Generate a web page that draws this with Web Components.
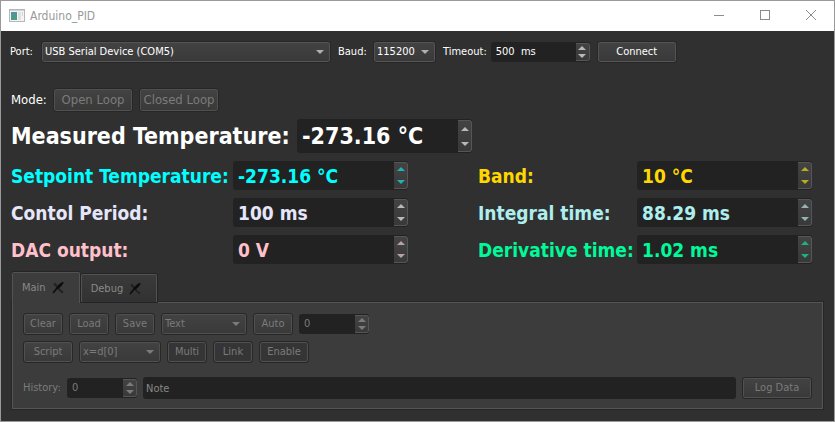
<!DOCTYPE html>
<html lang="en">
<head>
<meta charset="utf-8">
<title>Arduino_PID</title>
<style>
html, body { height: 100%; margin: 0; }
body { font: 11px/14px "DejaVu Sans Condensed", "DejaVu Sans", sans-serif; color: #fff; background: #303030; }
</style>
</head>
<body>
<pid-app></pid-app>
<script>
const define = (name, html, setup) => {
  const tpl = document.createElement('template');
  tpl.innerHTML = html;
  customElements.define(name, class extends HTMLElement {
    connectedCallback() {
      if (this.shadowRoot) return;
      this.attachShadow({ mode: 'open' }).append(tpl.content.cloneNode(true));
      if (setup) setup(this, this.shadowRoot);
    }
  });
};

define('title-bar', `
<style>
:host { display: flex; align-items: center; height: 30px; background: #fff; color: #999; padding-left: 8px; font-size: 12px; line-height: 16px; }
span { flex: 1; margin-left: 5px; }
button { width: 46px; height: 30px; padding: 0 0 2px; border: 0; background: none; display: grid; place-items: center; color: #8c8c8c; }
svg { display: block; }
</style>
<svg width="16" height="14" viewBox="0 0 16 14" aria-hidden="true">
  <defs><linearGradient id="g" x1="0" y1="0" x2="0.6" y2="1"><stop offset="0" stop-color="#5b8ea8"/><stop offset="1" stop-color="#48a07c"/></linearGradient></defs>
  <rect x=".5" y=".5" width="15" height="12" fill="#f4f4f4" stroke="#b4b8bc"/>
  <rect x="1" y="1" width="14" height="1" fill="#c9d3dc"/>
  <rect x="2" y="3" width="6" height="8" fill="url(#g)"/>
  <rect x="9" y="3" width="3" height="8" fill="#e0e0e0"/><rect x="13" y="3" width="1" height="4" fill="#d5d5d5"/>
</svg>
<span><slot></slot></span>
<button aria-label="Minimize"><svg width="10" height="11"><path d="M0 5.5H10" stroke="currentColor"/></svg></button>
<button aria-label="Maximize"><svg width="10" height="11"><rect x=".5" y=".5" width="9" height="9" fill="none" stroke="currentColor"/></svg></button>
<button aria-label="Close"><svg width="10" height="11"><path d="M0 0L10 10M10 0L0 10" stroke="currentColor"/></svg></button>
`);

define('push-button', `
<style>
:host { display: block; }
button { display: block; box-sizing: border-box; width: 100%; height: var(--h, 22px); padding: 0; font: inherit; color: #fff; border: 1px solid #272727; border-radius: 3px; background: linear-gradient(#434343, #393939); box-shadow: inset 0 0 0 1px #545454; white-space: nowrap; }
button:disabled { color: #7b7b7b; box-shadow: inset 0 0 0 1px #505050; }
:host([flat]) button { background: #353535; }
</style>
<button><slot></slot></button>
`, (el, root) => { root.querySelector('button').disabled = el.hasAttribute('disabled'); });

define('drop-down', `
<style>
:host { display: flex; align-items: center; gap: 7px; }
label { flex: 0 0 var(--label-w, auto); min-width: 0; white-space: nowrap; }
.box { display: grid; align-items: center; flex: 1; min-width: 0; }
select { grid-area: 1/1; box-sizing: border-box; width: 100%; height: var(--h, 22px); padding: 0 3px; font: inherit; color: #fff; appearance: none; border: 1px solid #272727; border-radius: 3px; background: linear-gradient(#434343, #393939); box-shadow: inset 0 0 0 1px #545454; }
select:disabled { color: #7b7b7b; opacity: 1; box-shadow: inset 0 0 0 1px #505050; }
svg { grid-area: 1/1; justify-self: end; margin-right: 7px; pointer-events: none; fill: #b0b0b0; }
select:disabled + svg { fill: #7b7b7b; }
</style>
<label for="s"></label>
<div class="box"><select id="s"></select><svg width="8" height="4"><path d="M0 0H8L4 4Z"/></svg></div>
`, (el, root) => {
  const s = root.querySelector('select'), l = root.querySelector('label');
  s.append(new Option(el.getAttribute('value')));
  s.disabled = el.hasAttribute('disabled');
  if (el.hasAttribute('label')) l.textContent = el.getAttribute('label');
  else { l.remove(); s.setAttribute('aria-label', el.getAttribute('name')); }
});

define('spin-field', `
<style>
:host { display: flex; align-items: center; gap: var(--gap, 4px); color: #fff; }
label { flex: 0 0 var(--label-w, auto); min-width: 0; white-space: nowrap; }
.box { box-sizing: border-box; display: flex; flex: 0 0 var(--box-w, 99px); height: var(--h, 20px); background: #222; border-radius: 3px; overflow: hidden; }
input { box-sizing: border-box; flex: 1; min-width: 0; width: 0; padding: 0 0 0 5px; border: 0; background: none; font: inherit; color: inherit; white-space: pre; }
.steps { box-sizing: border-box; width: 14px; margin: 1px 0; display: flex; flex-direction: column; border: 1px solid #565656; border-left: 0; border-radius: 0 3px 3px 0; background: linear-gradient(#434343, #393939); }
button { flex: 1; display: grid; place-items: center; padding: 0; border: 0; background: none; color: var(--arrow, #b8b8b8); }
svg { display: block; fill: currentColor; }
:host([disabled]) { color: #7b7b7b; --arrow: #7b7b7b; }
</style>
<label for="i"></label>
<div class="box"><input id="i" type="text"><div class="steps">
<button aria-label="Increase"><svg width="8" height="4"><path d="M4 0L8 4H0Z"/></svg></button>
<button aria-label="Decrease"><svg width="8" height="4"><path d="M0 0H8L4 4Z"/></svg></button></div></div>
`, (el, root) => {
  const i = root.querySelector('input'), l = root.querySelector('label');
  i.value = el.getAttribute('value');
  root.querySelectorAll('input,button').forEach(c => c.disabled = el.hasAttribute('disabled'));
  if (el.hasAttribute('label')) l.textContent = el.getAttribute('label');
  else { l.remove(); i.setAttribute('aria-label', el.getAttribute('name')); }
});

define('tab-item', `
<style>
:host { box-sizing: border-box; display: flex; align-items: center; gap: 6px; height: 28px; padding: 0 15px 0 9px; border: 1px solid #525252; border-bottom: 0; border-radius: 2px 2px 0 0; background: linear-gradient(#3a3a3a, #323232); box-shadow: 0 0 0 1px #242424; color: #888; }
:host([selected]) { height: 31px; margin-bottom: -1px; background: #3c3c3c; box-shadow: 0 -1px 0 #242424; z-index: 1; }
button { padding: 0; border: 0; background: none; font: inherit; color: inherit; }
svg { display: block; }
</style>
<button role="tab"><slot></slot></button>
<button aria-label="Close tab"><svg width="12" height="12" viewBox="0 0 12 12"><path d="M2 1.500Q4 3 6 6Q8 9 11 10.500" fill="none" stroke="#222" stroke-width="2.200"/><path d="M11 .5Q7 2.500 5 6Q3 9 1 11" fill="none" stroke="#0c0c0c" stroke-width="1.600"/><path d="M12 0L9.500 4L6 7L5 5L8 2Z" fill="#0c0c0c"/></svg></button>
`, (el, root) => {
  root.querySelector('[role=tab]').setAttribute('aria-selected', el.hasAttribute('selected'));
  root.querySelectorAll('button').forEach(b => b.disabled = true);
});

define('note-field', `
<style>
:host { display: block; flex: 1; min-width: 0; }
input { display: block; box-sizing: border-box; width: 100%; height: 22px; padding: 0 3px; border: 0; border-radius: 3px; background: #222; color: #888; font: inherit; }
</style>
<input type="text" value="Note" aria-label="Note" disabled>
`);

define('tab-panel', `
<style>
:host { display: block; color: #7b7b7b; }
.tabs { display: flex; align-items: flex-end; gap: 1px; }
.page { padding: 10px 10px 9px; border: 1px solid #555; background: #3c3c3c; box-shadow: 0 0 0 1px #262626; display: flex; flex-direction: column; }
</style>
<div class="tabs" role="tablist"><slot name="tab"></slot></div>
<div class="page" role="tabpanel"><slot></slot></div>
`);

define('pid-app', `
<style>
:host { box-sizing: border-box; display: flex; flex-direction: column; min-height: 100%; border: 1px solid #999; background: #303030; }
main { flex: 1; padding: 10px 10px 11px 9px; display: flex; flex-direction: column; }
.row { display: flex; align-items: center; gap: 6px; }
.port { gap: 7px; }
.mode { --h: 24px; margin: 25px 0 7px 1px; font-size: 13px; }
.mode span { width: 36px; }
.big { --h: 34px; --label-w: 280px; --box-w: 175px; --gap: 6px; font-weight: bold; font-size: 23px; line-height: 30px; margin-left: 1px; }
.values { --h: 29px; --box-w: 175px; display: flex; justify-content: space-between; margin: 8px 12px 8px 1px; font-weight: bold; font-size: 19px; line-height: 24px; }
.values div { display: grid; gap: 8px; }
.left { --label-w: 218px; }
.right { --label-w: 155px; }
tab-panel { margin: 0 1px 0 2px; }
</style>
<title-bar>Arduino_PID</title-bar>
<main>
  <div class="row port">
    <drop-down label="Port:" value="USB Serial Device (COM5)" style="width:321px;--label-w:24px"></drop-down>
    <drop-down label="Baud:" value="115200" style="width:98px;--label-w:28px"></drop-down>
    <spin-field label="Timeout:" value="500  ms"></spin-field>
    <push-button style="width:80px">Connect</push-button>
  </div>
  <div class="row mode"><span>Mode:</span>
    <push-button disabled style="width:80px">Open Loop</push-button>
    <push-button disabled style="width:80px">Closed Loop</push-button>
  </div>
  <spin-field class="big" label="Measured Temperature:" value="-273.16 °C"></spin-field>
  <div class="values">
    <div class="left">
      <spin-field label="Setpoint Temperature:" value="-273.16 °C" style="color:#0ff;--arrow:#1cb4b4"></spin-field>
      <spin-field label="Contol Period:" value="100 ms" style="color:#e6e6fa"></spin-field>
      <spin-field label="DAC output:" value="0 V" style="color:#ffc0cb;--arrow:#b8a0a4"></spin-field>
    </div>
    <div class="right">
      <spin-field label="Band:" value="10 °C" style="color:#ffd700;--arrow:#b8ae1c"></spin-field>
      <spin-field label="Integral time:" value="88.29 ms" style="color:#afeeee;--arrow:#94b4b4"></spin-field>
      <spin-field label="Derivative time:" value="1.02 ms" style="color:#00fa9a;--arrow:#1cb47c"></spin-field>
    </div>
  </div>
  <tab-panel>
    <tab-item slot="tab" selected>Main</tab-item>
    <tab-item slot="tab">Debug</tab-item>
    <div class="row">
      <push-button disabled style="width:40px">Clear</push-button>
      <push-button disabled style="width:40px">Load</push-button>
      <push-button disabled style="width:40px">Save</push-button>
      <drop-down disabled name="Format" value="Text" style="width:86px"></drop-down>
      <push-button disabled style="width:40px">Auto</push-button>
      <spin-field disabled name="Auto value" value="0" style="--box-w:70px"></spin-field>
    </div>
    <div class="row" style="margin-top:6px">
      <push-button disabled style="width:50px">Script</push-button>
      <drop-down disabled name="Expression" value="x=d[0]" style="width:82px"></drop-down>
      <push-button flat disabled style="width:40px">Multi</push-button>
      <push-button flat disabled style="width:40px">Link</push-button>
      <push-button flat disabled style="width:50px">Enable</push-button>
    </div>
    <div class="row" style="margin-top:14px">
      <spin-field disabled label="History:" value="0" style="--label-w:38px;--gap:6px;--box-w:70px"></spin-field>
      <note-field></note-field>
      <push-button disabled style="width:70px">Log Data</push-button>
    </div>
  </tab-panel>
</main>
`);
</script>
</body>
</html>
